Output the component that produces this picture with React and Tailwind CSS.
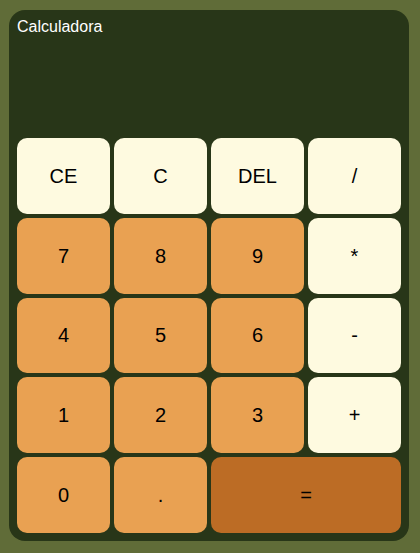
const keys = [
  { label: "CE", tone: "light" },
  { label: "C", tone: "light" },
  { label: "DEL", tone: "light" },
  { label: "/", tone: "light" },
  { label: "7", tone: "num" },
  { label: "8", tone: "num" },
  { label: "9", tone: "num" },
  { label: "*", tone: "light" },
  { label: "4", tone: "num" },
  { label: "5", tone: "num" },
  { label: "6", tone: "num" },
  { label: "-", tone: "light" },
  { label: "1", tone: "num" },
  { label: "2", tone: "num" },
  { label: "3", tone: "num" },
  { label: "+", tone: "light" },
  { label: "0", tone: "num" },
  { label: ".", tone: "num" },
  { label: "=", tone: "eq" },
];

const toneClass = {
  light: "bg-[#fefae0]",
  num: "bg-[#e9a152]",
  eq: "col-span-2 bg-[#bc6c25]",
};

export default function App() {
  return (
    <div className="min-h-screen bg-[#606c38] pt-[10px] font-['Liberation_Sans',Arial,sans-serif]">
      <div className="ml-[9px] w-[400px] rounded-2xl bg-[#283618] p-2">
        <div className="h-[116px] text-base leading-[18px] text-white">Calculadora</div>
        <div className="mt-1 grid grid-cols-4 gap-1">
          {keys.map((k) => (
            <button
              key={k.label}
              className={`flex h-[75.75px] items-center justify-center rounded-[10px] text-xl text-black ${toneClass[k.tone]}`}
            >
              {k.label}
            </button>
          ))}
        </div>
      </div>
    </div>
  );
}
